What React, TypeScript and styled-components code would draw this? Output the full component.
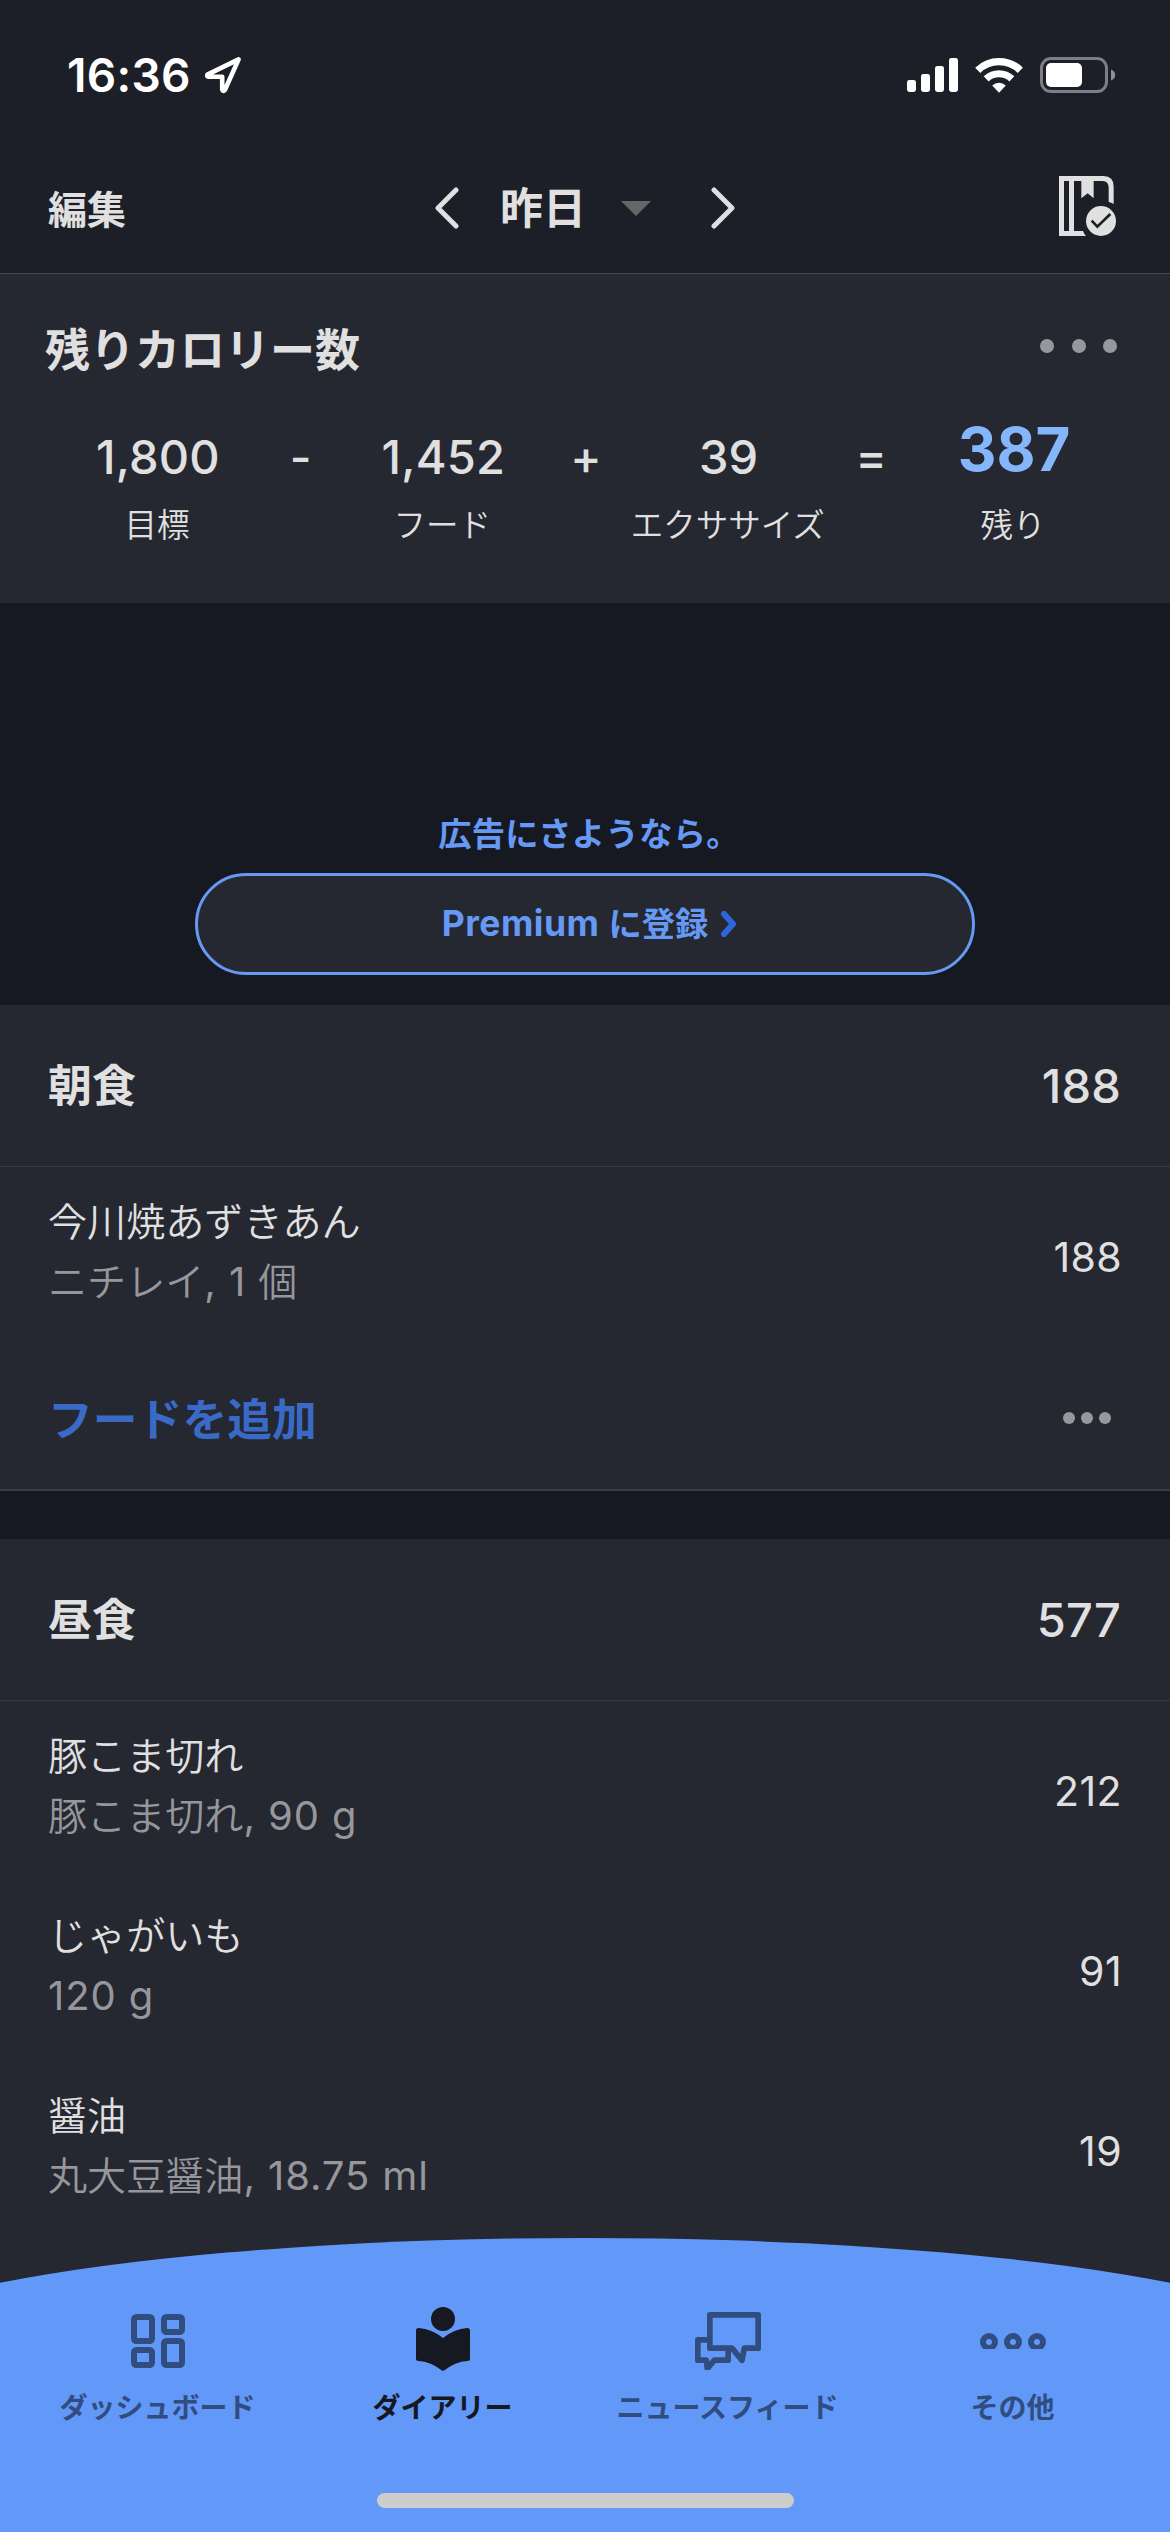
import React from "react";
import styled, { createGlobalStyle } from "styled-components";

const color = {
  header: "#1d1f28",
  surface: "#252731",
  base: "#161822",
  text: "#e0e0e0",
  muted: "#96979b",
  accent: "#6699f4",
  tab: "#6298f8",
  tabMuted: "#314c7e",
  tabActive: "#161822",
};

const GlobalStyle = createGlobalStyle`
  * { box-sizing: border-box; }
  body {
    margin: 0;
    background: ${color.base};
    color: ${color.text};
    font-family: Inter, "Noto Sans CJK JP", sans-serif;
  }
  svg { display: block; flex: none; }
`;

const Screen = styled.div`
  width: 1170px;
  height: 2532px;
  display: flex;
  flex-direction: column;
  overflow: hidden;
`;

const Header = styled.header`
  flex: none;
  height: 274px;
  background: ${color.header};
  border-bottom: 1px solid #444650;
`;

const StatusBar = styled.div`
  height: 149px;
  padding: 0 54px 0 67px;
  display: flex;
  align-items: center;
  justify-content: space-between;
  color: #fff;
`;

const StatusGroup = styled.div<{ $gap: number }>`
  display: flex;
  align-items: center;
  gap: ${(p) => p.$gap}px;
`;

const Clock = styled.span`
  font-size: 46px;
  font-weight: 600;
  line-height: 60px;
  letter-spacing: 0.3px;
`;

const NavBar = styled.nav`
  height: 118px;
  padding: 0 54px;
  display: grid;
  grid-template-columns: 1fr auto 1fr;
  align-items: center;
`;

const EditButton = styled.span`
  margin-left: -6px;
  padding-top: 4px;
  font-size: 39px;
  font-weight: 700;
  line-height: 60px;
`;

const DateSwitcher = styled.div`
  width: 300px;
  display: flex;
  align-items: center;
`;

const DateLabel = styled.span`
  margin: 0 35px 0 41px;
  width: 86px;
  font-size: 43px;
  font-weight: 600;
  line-height: 60px;
  white-space: nowrap;
`;

const Caret = styled.span`
  width: 0;
  height: 0;
  margin-right: 60px;
  border: 15px solid transparent;
  border-top-color: #666;
  border-bottom: 0;
`;

const NavEnd = styled.div`
  display: flex;
  justify-content: flex-end;
  padding-bottom: 4px;
`;

const Summary = styled.section`
  flex: none;
  height: 329px;
  padding-top: 46px;
  background: ${color.surface};
`;

const SummaryHead = styled.div`
  height: 60px;
  padding: 0 53px 0 45px;
  display: flex;
  align-items: center;
  justify-content: space-between;
`;

const SummaryTitle = styled.h1`
  margin: 0;
  padding-top: 2px;
  font-size: 45px;
  font-weight: 700;
  line-height: 60px;
`;

const Dots = styled.span<{ $size: number; $gap: number; $lift?: number }>`
  display: flex;
  gap: ${(p) => p.$gap}px;
  margin-bottom: ${(p) => p.$lift ?? 0}px;
  i {
    width: ${(p) => p.$size}px;
    height: ${(p) => p.$size}px;
    border-radius: 50%;
    background: #97989b;
  }
`;

const Equation = styled.div`
  display: grid;
  grid-template-columns: repeat(7, 142.7px);
  justify-content: center;
  margin-top: 39px;
`;

const Term = styled.div`
  display: flex;
  flex-direction: column;
  align-items: center;
  white-space: nowrap;
`;

const Amount = styled.span<{ $result?: boolean }>`
  height: 75px;
  padding-left: 2px;
  font-size: ${(p) => (p.$result ? 60 : 47)}px;
  font-weight: ${(p) => (p.$result ? 700 : 500)};
  line-height: ${(p) => (p.$result ? 60 : 75)}px;
  letter-spacing: ${(p) => (p.$result ? 0 : 0.2)}px;
  color: ${(p) => (p.$result ? "#83b6fa" : color.text)};
`;

const TermLabel = styled.span`
  margin-top: 11px;
  font-size: 32.5px;
  font-weight: 350;
  line-height: 41px;
`;

const Promo = styled.section`
  flex: none;
  height: 402px;
  padding-bottom: 30px;
  display: flex;
  flex-direction: column;
  align-items: center;
  justify-content: flex-end;
  gap: 19px;
  color: ${color.accent};
`;

const PromoText = styled.span`
  padding-left: 8px;
  font-size: 33.3px;
  font-weight: 600;
  line-height: 40px;
  letter-spacing: 0.3px;
`;

const PromoButton = styled.div`
  width: 780px;
  height: 102px;
  padding-left: 9px;
  border: 3px solid ${color.accent};
  border-radius: 51px;
  background: ${color.surface};
  display: flex;
  align-items: center;
  justify-content: center;
  gap: 12px;
  font-size: 33.3px;
  font-weight: 600;
  line-height: 50px;
`;

const PromoBrand = styled.span`
  font-size: 35.5px;
  font-weight: 700;
  letter-spacing: 0.5px;
`;

const Meal = styled.section`
  flex: none;
  background: ${color.surface};
`;

const MealHead = styled.div`
  height: 162px;
  padding: 0 49px 0 48px;
  display: flex;
  align-items: center;
  justify-content: space-between;
  border-bottom: 1px solid #3a3c46;
`;

const MealName = styled.h2`
  margin: 0;
  padding-top: 1px;
  font-size: 44px;
  font-weight: 700;
  line-height: 60px;
`;

const MealTotal = styled.span`
  font-size: 47px;
  font-weight: 500;
  line-height: 60px;
  letter-spacing: 0.2px;
`;

const FoodRow = styled.div`
  height: 180px;
  padding: 0 48px;
  display: flex;
  align-items: center;
  justify-content: space-between;
`;

const FoodText = styled.div`
  display: flex;
  flex-direction: column;
  padding-bottom: 10px;
  font-size: 39.1px;
  font-weight: 350;
  line-height: 60px;
`;

const FoodDetail = styled.span`
  color: ${color.muted};
`;

const FoodAmount = styled.span`
  font-size: 40px;
  font-weight: 400;
  letter-spacing: 0.9px;
`;

const FoodUnit = styled.span`
  font-size: 39px;
  font-weight: 350;
`;

const FoodCalories = styled.span`
  font-size: 41px;
  line-height: 60px;
  letter-spacing: 0.4px;
`;

const AddRow = styled.div`
  height: 144px;
  padding: 0 59px 0 48px;
  display: flex;
  align-items: center;
  justify-content: space-between;
  border-bottom: 2px solid #3a3c46;
`;

const AddLink = styled.span`
  padding-top: 3px;
  font-size: 44.8px;
  font-weight: 600;
  line-height: 60px;
  color: #386ac6;
`;

const Diary = styled.main`
  flex: 1;
  min-height: 0;
  display: flex;
  flex-direction: column;
  gap: 48px;
  overflow: hidden;
`;

const LastMeal = styled(Meal)`
  flex: 1;
`;

const TabBar = styled.footer`
  flex: none;
  height: 294px;
  background: ${color.tab};
`;

const Curve = styled.div`
  height: 46px;
  background: ${color.surface};
`;

const Tabs = styled.div`
  display: grid;
  grid-template-columns: repeat(4, 285px);
  justify-content: center;
  height: 208px;
`;

const Tab = styled.div<{ $active?: boolean }>`
  display: flex;
  flex-direction: column;
  align-items: center;
  padding-top: 17px;
  color: ${(p) => (p.$active ? color.tabActive : color.tabMuted)};
`;

const TabIcon = styled.div<{ $active?: boolean }>`
  height: 80px;
  padding-bottom: ${(p) => (p.$active ? 4 : 0)}px;
  display: flex;
  align-items: center;
`;

const TabLabel = styled.span`
  margin-top: 7px;
  font-size: 28px;
  font-weight: 600;
  line-height: 40px;
  white-space: nowrap;
`;

const HomeIndicator = styled.div`
  width: 417px;
  height: 15px;
  margin: 1px auto 0;
  border-radius: 8px;
  background: #cdcdcd;
`;

const LocationIcon = () => (
  <svg width="38" height="38" viewBox="0 0 38 38" fill="none" stroke="#fff" strokeWidth="4.6" strokeLinejoin="round">
    <path d="M34.6 3.4 L3.4 18.6 Q2.6 20.6 4.6 20.8 L18.2 20.8 L18.2 33.6 Q19.2 36 21 33.8 Z" />
  </svg>
);

const SignalIcon = () => (
  <svg width="51" height="34" viewBox="0 0 51 34" fill="#fff">
    <rect x="0" y="22" width="9" height="12" rx="2.4" />
    <rect x="14" y="16" width="9" height="18" rx="2.4" />
    <rect x="28" y="8" width="9" height="26" rx="2.4" />
    <rect x="42" y="0" width="9" height="34" rx="2.4" />
  </svg>
);

const WifiIcon = () => (
  <svg width="48" height="36" viewBox="0 0 49 36" fill="none" stroke="#fff">
    <path d="M2.8 13.2 A31 31 0 0 1 46.2 13.2" strokeWidth="7.6" />
    <path d="M11.4 22 A19 19 0 0 1 37.6 22" strokeWidth="7.2" />
    <path d="M24.5 36 L17.6 28.6 A10 10 0 0 1 31.4 28.6 Z" fill="#fff" stroke="none" />
  </svg>
);

const BatteryIcon = () => (
  <svg width="76" height="36" viewBox="0 0 76 36">
    <rect x="1.5" y="1.5" width="65" height="33" rx="9.5" fill="none" stroke="#7d7e86" strokeWidth="3" />
    <rect x="6" y="6" width="36" height="24" rx="5" fill="#fff" />
    <path d="M71 12.5 Q75.2 14 75.2 18 Q75.2 22 71 23.5 Z" fill="#8e8f95" />
  </svg>
);

const Chevron = ({ flip }: { flip?: boolean }) => (
  <svg width="24" height="42" viewBox="0 0 24 42" fill="none" stroke="#e0e0e0" strokeWidth="5" strokeLinecap="round" strokeLinejoin="round">
    <path d={flip ? "M3 3 L21 21 L3 39" : "M21 3 L3 21 L21 39"} />
  </svg>
);

const SmallChevron = () => (
  <svg width="17" height="28" viewBox="0 0 17 28" fill="none" stroke="#2d66dd" strokeWidth="6" strokeLinecap="round" strokeLinejoin="round">
    <path d="M4 4 L13 14 L4 24" />
  </svg>
);

const DiaryDoneIcon = () => (
  <svg width="57" height="60" viewBox="57 48 171 180">
    <g fill="#e0e0e0">
      <path
        fillRule="evenodd"
        d="M57 48 H191 Q221 48 221 80 V132 Q214 128 206 126 V84 Q206 63 188 63 H161 V115 L143 100 L124 115 V63 H102 V213 H129 Q132 221 138 228 H57 Z M72 63 V213 H87 V63 Z"
      />
      <circle cx="183" cy="183" r="45" />
    </g>
    <path d="M155 182 L172 200 L211 162" fill="none" stroke="#1d1f28" strokeWidth="8" />
  </svg>
);

const DashboardIcon = () => (
  <svg width="54" height="54" viewBox="0 0 54 54" fill="none" stroke="currentColor" strokeWidth="6">
    <rect x="3" y="3" width="18" height="24" rx="2.5" />
    <rect x="33" y="3" width="18" height="15" rx="2.5" />
    <rect x="3" y="36" width="18" height="15" rx="2.5" />
    <rect x="33" y="27" width="18" height="24" rx="2.5" />
  </svg>
);

const ReaderIcon = () => (
  <svg width="54" height="64" viewBox="0 0 54 64" fill="currentColor">
    <circle cx="27" cy="12" r="12" />
    <path d="M0 23.5 Q0 21 2.6 21 Q16 22 27 31 Q38 22 51.4 21 Q54 21 54 23.5 V51.5 Q54 54 51.4 54 Q39 54.8 28.4 63.2 Q27 64.4 25.6 63.2 Q15 54.8 2.6 54 Q0 54 0 51.5 Z" />
  </svg>
);

const NewsIcon = () => (
  <svg width="66" height="58" viewBox="42 36 198 174" fill="none" stroke="currentColor" strokeWidth="17" strokeLinejoin="round">
    <path d="M86.5 44.5 H231.5 V144.5 H190 L183 181 L153 144.5 H86.5 Z" />
    <path d="M80 119.5 H50.5 V180.5 H76 L79 206 L100 180.5 H141.5 V150" />
  </svg>
);

const MoreIcon = () => (
  <svg width="66" height="16" viewBox="0 0 66 16" fill="none" stroke="currentColor" strokeWidth="6">
    <circle cx="9" cy="9" r="6" />
    <circle cx="33" cy="9" r="6" />
    <circle cx="57" cy="9" r="6" />
  </svg>
);

const ThreeDots = (props: { size: number; gap: number; lift?: number }) => (
  <Dots $size={props.size} $gap={props.gap} $lift={props.lift}>
    <i />
    <i />
    <i />
  </Dots>
);

type FoodItem = { name: string; brand?: string; amount: string; unit?: string; kcal: number };

const breakfast: FoodItem[] = [{ name: "今川焼あずきあん", brand: "ニチレイ", amount: "1 ", unit: "個", kcal: 188 }];

const lunch: FoodItem[] = [
  { name: "豚こま切れ", brand: "豚こま切れ", amount: "90 g", kcal: 212 },
  { name: "じゃがいも", amount: "120 g", kcal: 91 },
  { name: "醤油", brand: "丸大豆醤油", amount: "18.75 ml", kcal: 19 },
];

const equation = [
  { value: "1,800", label: "目標" },
  { value: "-" },
  { value: "1,452", label: "フード" },
  { value: "+" },
  { value: "39", label: "エクササイズ" },
  { value: "=" },
  { value: "387", label: "残り", result: true },
];

const tabs = [
  { label: "ダッシュボード", icon: <DashboardIcon /> },
  { label: "ダイアリー", icon: <ReaderIcon />, active: true },
  { label: "ニュースフィード", icon: <NewsIcon /> },
  { label: "その他", icon: <MoreIcon /> },
];

const MealContent = ({ name, total, foods }: { name: string; total: number; foods: FoodItem[] }) => (
  <>
    <MealHead>
      <MealName>{name}</MealName>
      <MealTotal>{total}</MealTotal>
    </MealHead>
    {foods.map((f) => (
      <FoodRow key={f.name}>
        <FoodText>
          <span>{f.name}</span>
          <FoodDetail>
            {f.brand}
            <FoodAmount>{f.brand ? `, ${f.amount}` : f.amount}</FoodAmount>
            {f.unit && <FoodUnit>{f.unit}</FoodUnit>}
          </FoodDetail>
        </FoodText>
        <FoodCalories>{f.kcal}</FoodCalories>
      </FoodRow>
    ))}
  </>
);

export default function App() {
  return (
    <Screen lang="ja">
      <GlobalStyle />
      <Header>
        <StatusBar>
          <StatusGroup $gap={13}>
            <Clock>16:36</Clock>
            <LocationIcon />
          </StatusGroup>
          <StatusGroup $gap={17}>
            <SignalIcon />
            <WifiIcon />
            <BatteryIcon />
          </StatusGroup>
        </StatusBar>
        <NavBar>
          <EditButton>編集</EditButton>
          <DateSwitcher>
            <Chevron />
            <DateLabel>昨日</DateLabel>
            <Caret />
            <Chevron flip />
          </DateSwitcher>
          <NavEnd>
            <DiaryDoneIcon />
          </NavEnd>
        </NavBar>
      </Header>

      <Summary>
        <SummaryHead>
          <SummaryTitle>残りカロリー数</SummaryTitle>
          <ThreeDots size={14} gap={17.5} lift={8} />
        </SummaryHead>
        <Equation>
          {equation.map((t) => (
            <Term key={t.value}>
              <Amount $result={t.result}>{t.value}</Amount>
              {t.label && <TermLabel>{t.label}</TermLabel>}
            </Term>
          ))}
        </Equation>
      </Summary>

      <Promo>
        <PromoText>広告にさようなら。</PromoText>
        <PromoButton>
          <span>
            <PromoBrand>Premium </PromoBrand>
            に登録
          </span>
          <SmallChevron />
        </PromoButton>
      </Promo>

      <Diary>
        <Meal>
          <MealContent name="朝食" total={188} foods={breakfast} />
          <AddRow>
            <AddLink>フードを追加</AddLink>
            <ThreeDots size={12} gap={6} />
          </AddRow>
        </Meal>
        <LastMeal>
          <MealContent name="昼食" total={577} foods={lunch} />
        </LastMeal>
      </Diary>

      <TabBar>
        <Curve>
          <svg width="1170" height="46" viewBox="0 0 1170 46">
            <ellipse cx="585" cy="123.6" rx="760" ry="123.6" fill={color.tab} />
          </svg>
        </Curve>
        <Tabs>
          {tabs.map((t) => (
            <Tab key={t.label} $active={t.active}>
              <TabIcon $active={t.active}>{t.icon}</TabIcon>
              <TabLabel>{t.label}</TabLabel>
            </Tab>
          ))}
        </Tabs>
        <HomeIndicator />
      </TabBar>
    </Screen>
  );
}
